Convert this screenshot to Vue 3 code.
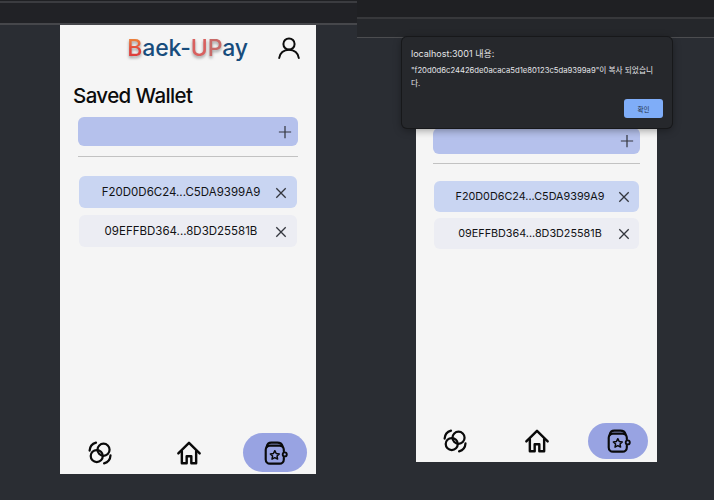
<template>
  <div class="screen">
    <section v-for="pane in panes" :key="pane.id" class="pane" :class="pane.id">
      <div class="chrome">
        <div class="chrome-top"></div>
        <div class="chrome-bottom"></div>
      </div>

      <div class="phone">
        <template v-if="!pane.alert">
          <header class="app-header">
            <div class="logo">
              <span class="logo-accent">B</span><span class="logo-navy">aek-</span><span class="logo-red">U</span><span class="logo-fade">P</span><span class="logo-navy">ay</span>
            </div>
            <svg class="user-icon" viewBox="1 1 22 22" fill="none" stroke="#0d0d0d" stroke-width="2" stroke-linecap="round">
              <circle cx="12" cy="8" r="5.600" />
              <path d="M2.200 22c.6-4.800 4.400-8.300 9.800-8.300s9.200 3.500 9.800 8.300" />
            </svg>
          </header>

          <h1 class="title">Saved Wallet</h1>
        </template>

        <div class="add-bar">
          <svg class="add-icon" viewBox="0 0 16 16" stroke="#34373e" stroke-width="1.400">
            <path d="M8 1v14M1 8h14" />
          </svg>
        </div>
        <div class="divider"></div>

        <ul class="wallet-list">
          <li
            v-for="(wallet, i) in wallets"
            :key="wallet"
            class="wallet"
            :class="{ selected: i === 0 }"
          >
            <span class="address">{{ wallet }}</span>
            <svg class="remove-icon" viewBox="0 0 12 12" stroke="#34373e" stroke-width="1.300">
              <path d="M1.300 1.300l9.400 9.400M10.700 1.300l-9.400 9.400" />
            </svg>
          </li>
        </ul>

        <nav class="bottom-nav">
          <div class="nav-item swap">
            <svg viewBox="0 0 28 28" fill="none" stroke="#0a0a0a" stroke-width="2.400" stroke-linecap="round">
              <circle cx="10.500" cy="17.300" r="6.500" />
              <circle cx="17.800" cy="10.500" r="6.500" />
              <path d="M2.800 11.500C3 7.500 5.800 4 9.700 2.800" />
              <path d="M25.300 16.500c-.2 4-3 7.500-6.900 8.700" />
            </svg>
          </div>
          <div class="nav-item home">
            <svg viewBox="0 0 28 28" fill="none" stroke="#0a0a0a" stroke-width="2.600" stroke-linejoin="round" stroke-linecap="round">
              <path d="M2.500 14.500 14 3l11.500 11.500" />
              <path d="M6.300 12v13h5.200v-7.500h5V25h5.200V12" />
            </svg>
          </div>
          <div class="nav-item wallet-tab">
            <svg viewBox="0 0 28 28" fill="none" stroke="#0a0a0a" stroke-width="2.300" stroke-linejoin="round" stroke-linecap="round">
              <path d="M23.500 12V10.500A4.500 4.500 0 0 0 19 6H8.500A4.500 4.500 0 0 0 4 10.500V21a4.500 4.500 0 0 0 4.500 4.500H19a4.500 4.500 0 0 0 4.500-4.500v-2" />
              <path d="M5 7.500C5.500 4.500 7.500 2.800 10 2.800h6.500c3 0 5 1.500 5.700 4" />
              <circle cx="24.500" cy="15.500" r="2.200" stroke-width="2" />
              <path d="m13.800 11.500 1.500 3 3.300.5-2.400 2.300.6 3.300-3-1.600-3 1.600.6-3.300L9 15l3.300-.5z" stroke-width="1.600" />
            </svg>
          </div>
        </nav>
      </div>

      <div v-if="pane.alert" class="alert">
        <p class="alert-origin">localhost:3001 내용:</p>
        <p class="alert-message">"f20d0d6c24426de0acaca5d1e80123c5da9399a9"이 복사 되었습니다.</p>
        <div class="alert-actions">
          <button class="alert-ok">확인</button>
        </div>
      </div>
    </section>
  </div>
</template>

<script setup>
const panes = [
  { id: 'before', alert: false },
  { id: 'after', alert: true }
]

const wallets = ['F20D0D6C24...C5DA9399A9', '09EFFBD364...8D3D25581B']
</script>

<style>
html, body {
  margin: 0;
  background: #2a2d33;
}
</style>

<style scoped>
.screen {
  display: flex;
  width: 714px;
  height: 500px;
  overflow: hidden;
  background: #2a2d33;
  font-family: Inter, "Noto Sans CJK KR", sans-serif;
}

.pane {
  position: relative;
  display: flex;
  flex-direction: column;
  width: 357px;
}

.chrome-top, .chrome-bottom {
  box-sizing: border-box;
  background: #212226;
}
.before .chrome-top { height: 3px; border-bottom: 2px solid #3b3c40; background: #1f2023; }
.before .chrome-bottom { height: 22px; border-bottom: 2px solid #46474b; }
.after .chrome-top { height: 19px; border-bottom: 2px solid #37383b; background: #1f2023; }
.after .chrome-bottom { height: 19px; border-bottom: 1px solid #4c4d50; background: #25272b; }

.phone {
  display: flex;
  flex-direction: column;
  box-sizing: border-box;
  background: #f5f5f5;
}
.before .phone { width: 256px; height: 449px; margin-left: 60px; }
.after .phone { width: 241px; height: 424px; margin-left: 59px; padding-top: 90px; }

.app-header {
  display: flex;
  align-items: center;
  justify-content: flex-end;
  height: 46px;
  flex-shrink: 0;
  gap: 30px;
  padding-right: 16px;
}

.logo {
  font-size: 23px;
  font-weight: 500;
  letter-spacing: -0.1px;
  line-height: 1;
  white-space: nowrap;
}
.logo-navy { color: #174c7c; }
.logo-accent {
  background: linear-gradient(180deg, #f0a13c 0%, #e2443c 55%, #d93a3e 100%);
  -webkit-background-clip: text;
  background-clip: text;
  color: transparent;
  filter: drop-shadow(0 2px 1.500px rgba(80, 80, 80, 0.55));
}
.logo-red {
  color: #d9605f;
  filter: drop-shadow(0 2px 1.500px rgba(80, 80, 80, 0.55));
}
.logo-fade {
  color: #c86a68;
  filter: drop-shadow(0 2px 1.500px rgba(80, 80, 80, 0.55));
}

.user-icon {
  width: 22px;
  height: 22px;
  flex-shrink: 0;
}

.title {
  margin: 0;
  height: 46px;
  flex-shrink: 0;
  padding: 3px 0 0 13px;
  box-sizing: border-box;
  font-size: 20.500px;
  font-weight: 550;
  letter-spacing: -0.6px;
  line-height: 43px;
  color: #0c0c0c;
}

.add-bar {
  display: flex;
  align-items: center;
  justify-content: flex-end;
  flex-shrink: 0;
  background: #b5c1ec;
  border-radius: 6px;
}
.before .add-bar { height: 29px; margin: 0 18px; padding-right: 6px; }
.after .add-bar { height: 26px; margin: 0 17px; padding-right: 6px; }

.add-icon {
  width: 14px;
  height: 14px;
}

.divider {
  height: 1px;
  flex-shrink: 0;
  background: #c2c2c2;
}
.before .divider { margin: 10px 18px 0; }
.after .divider { margin: 9px 17px 0; }

.wallet-list {
  display: flex;
  flex-direction: column;
  margin: 0;
  padding: 0;
  list-style: none;
}
.before .wallet-list { gap: 7px; margin: 19px 19px 0; }
.after .wallet-list { gap: 6px; margin: 17px 18px 0; }

.wallet {
  display: flex;
  align-items: center;
  justify-content: space-between;
  background: #ecedf3;
  border-radius: 6px;
  padding-right: 10px;
}
.before .wallet { height: 32px; }
.after .wallet { height: 31px; }
.after .wallet { padding-right: 9px; }
.wallet.selected { background: #c9d5f2; }

.address {
  flex: 1;
  text-align: center;
  color: #111214;
  white-space: nowrap;
}
.before .address { padding-left: 16px; font-size: 11.500px; }
.after .address { padding-left: 16px; font-size: 10.800px; }

.remove-icon {
  width: 12px;
  height: 12px;
  flex-shrink: 0;
  margin-left: 8px;
}
.before .remove-icon { margin-top: 1px; }

.bottom-nav {
  display: flex;
  align-items: center;
  margin-top: auto;
}
.before .bottom-nav { padding: 0 9px 2px 24px; }
.after .bottom-nav { padding: 0 9px 3px 23px; }

.nav-item {
  display: flex;
  align-items: center;
  justify-content: center;
}
.nav-item svg {
  width: 26px;
  height: 26px;
}
.swap { width: 32px; }
.home { width: 32px; }
.before .home { margin-left: 57px; }
.after .home { margin-left: 50px; }

.wallet-tab {
  margin-left: auto;
  background: #98a3e2;
  border-radius: 20px;
}
.before .wallet-tab { width: 64px; height: 39px; }
.after .wallet-tab { width: 60px; height: 36px; }

.alert {
  position: absolute;
  left: 45px;
  top: 37px;
  box-sizing: border-box;
  width: 270px;
  height: 91px;
  padding: 11px 9px 0;
  background: #26282c;
  border-radius: 5px;
  box-shadow: 0 0 0 1px #17181a, 0 2px 8px rgba(0, 0, 0, 0.4);
  color: #e4e5e8;
}
.alert-origin {
  margin: 0;
  font-size: 9px;
  line-height: 11px;
}
.alert-message {
  margin: 6px 0 0;
  width: 247px;
  font-size: 7.700px;
  line-height: 12.500px;
  word-break: break-all;
}
.alert-actions {
  display: flex;
  justify-content: flex-end;
  margin-top: 9px;
}
.alert-ok {
  width: 39px;
  height: 19px;
  padding: 0;
  border: none;
  border-radius: 3px;
  background: #7fadf8;
  color: #24324a;
  font-family: inherit;
  font-size: 6.500px;
}
</style>
